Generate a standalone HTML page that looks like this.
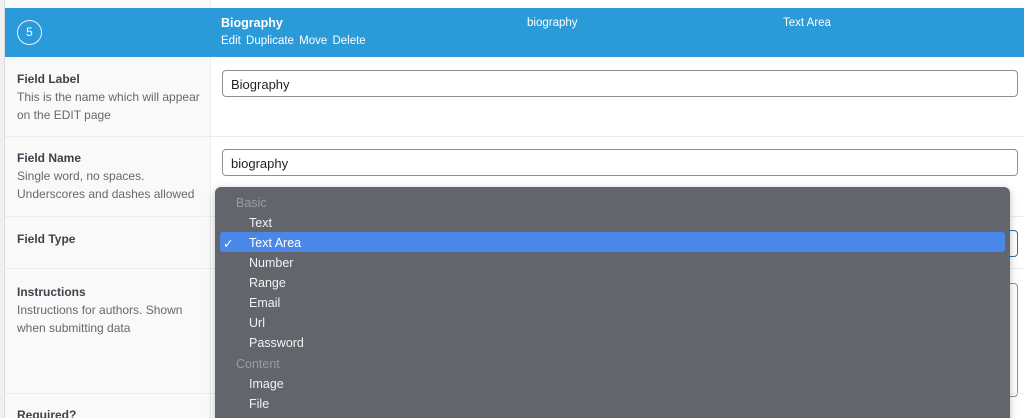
<!DOCTYPE html>
<html><head><meta charset="utf-8"><style>
*{box-sizing:border-box;margin:0;padding:0}
html,body{width:1024px;height:418px;overflow:hidden}
body{background:#fff;font-family:"Liberation Sans",sans-serif;position:relative;color:#1d2327}
.a{position:absolute}
.lc{left:5px;width:206px;background:#f9f9f9;border-right:1px solid #eee}
.sep{left:5px;right:0;height:1px;background:#ececec}
.lbl{font-weight:bold;font-size:12px;color:#3c434a;left:17px}
.desc{font-size:12px;color:#646970;left:17px;line-height:18px}
.inp{left:222px;width:796px;height:27px;border:1px solid #8c8f94;border-radius:4px;font-size:13px;padding:6px 8px;color:#1d2327}
.dd{left:215px;top:187px;width:795px;height:240px;background:#63656c;border-radius:6px;box-shadow:0 2px 8px rgba(0,0,0,.25)}
.it{position:absolute;left:34px;font-size:12.5px;color:#f2f2f2}
.gp{position:absolute;left:21px;font-size:12.5px;color:#9a9ca2}
</style></head><body>
<div class="a" style="left:0;top:0;width:5px;height:418px;background:#f0f0f1;border-right:1px solid #ddd"></div>
<div class="a lc" style="top:0;height:418px"></div>
<div class="a" style="left:5px;top:8px;right:0;height:49px;background:#2b9ad9"></div>
<div class="a" style="left:17px;top:20px;width:25px;height:25px;border:1.5px solid #e6f2fb;border-radius:50%;color:#fff;font-size:12px;text-align:center;line-height:22px">5</div>
<div class="a" style="left:221px;top:16px;color:#fff;font-weight:bold;font-size:12.5px">Biography</div>
<div class="a" style="left:221px;top:35px;color:#fff;font-size:11.5px;word-spacing:2px">Edit Duplicate Move Delete</div>
<div class="a" style="left:527px;top:17px;color:#fff;font-size:11.5px">biography</div>
<div class="a" style="left:783px;top:17px;color:#fff;font-size:11.5px">Text Area</div>

<div class="a lbl" style="top:72px">Field Label</div>
<div class="a desc" style="top:88px">This is the name which will appear<br>on the EDIT page</div>
<div class="a inp" style="top:70px">Biography</div>
<div class="a sep" style="top:136px"></div>

<div class="a lbl" style="top:151px">Field Name</div>
<div class="a desc" style="top:167px">Single word, no spaces.<br>Underscores and dashes allowed</div>
<div class="a inp" style="top:149px">biography</div>
<div class="a sep" style="top:216px"></div>

<div class="a lbl" style="top:232px">Field Type</div>
<div class="a" style="left:990px;top:230px;width:28px;height:27px;border:1.5px solid #2271b1;border-radius:4px"></div>
<div class="a sep" style="top:268px"></div>

<div class="a lbl" style="top:285px">Instructions</div>
<div class="a desc" style="top:301px">Instructions for authors. Shown<br>when submitting data</div>
<div class="a" style="left:990px;top:283px;width:28px;height:114px;border:1px solid #8c8f94;border-radius:4px"></div>
<div class="a sep" style="top:393px"></div>
<div class="a lbl" style="top:408px">Required?</div>

<div class="a dd">
<div class="gp" style="top:9px">Basic</div>
<div class="it" style="top:29px">Text</div>
<div style="position:absolute;left:5px;top:45px;width:785px;height:20px;background:#4a87e8;border-radius:3px"></div>
<div class="it" style="top:49px;left:8px;color:#fff">✓</div>
<div class="it" style="top:49px;color:#fff">Text Area</div>
<div class="it" style="top:69px">Number</div>
<div class="it" style="top:89px">Range</div>
<div class="it" style="top:109px">Email</div>
<div class="it" style="top:129px">Url</div>
<div class="it" style="top:149px">Password</div>
<div class="gp" style="top:170px">Content</div>
<div class="it" style="top:190px">Image</div>
<div class="it" style="top:210px">File</div>
</div>
</body></html>
